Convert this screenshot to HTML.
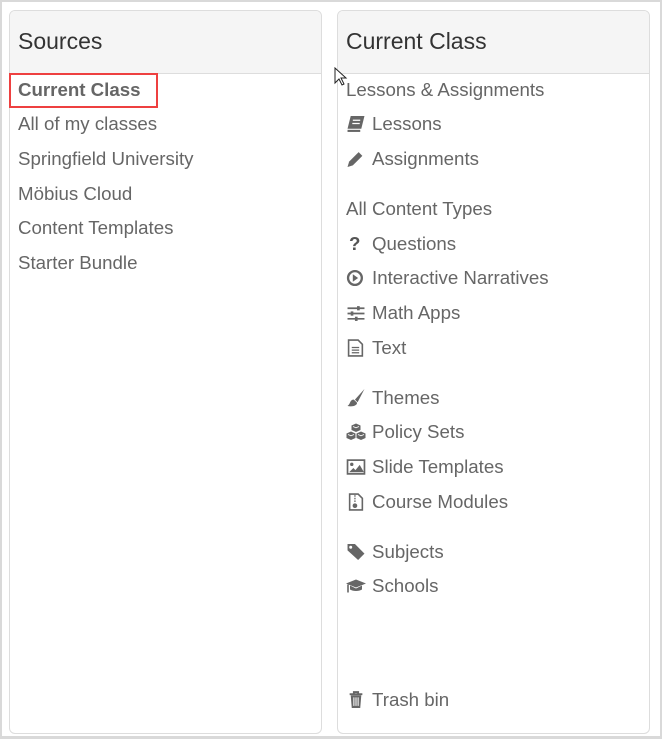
<!DOCTYPE html>
<html><head><meta charset="utf-8"><style>
*{margin:0;padding:0;box-sizing:border-box}
html,body{width:662px;height:739px;background:#fff;overflow:hidden}
body{font-family:"Liberation Sans",Arial,sans-serif;color:#666;position:relative}
.frame{position:absolute;left:0;top:0;width:662px;height:739px;border:2px solid #d9d9d9;border-bottom-width:3px}
.panel{position:absolute;top:10px;height:724px;border:1px solid #ddd;border-radius:6px;background:#fff;overflow:hidden}
.hd{height:63px;background:#f5f5f5;border-bottom:1px solid #ddd;font-size:23px;color:#333;padding:17px 0 0 8px}
.it{position:absolute;font-size:18.7px;line-height:22px;white-space:nowrap}
.ic{position:absolute;left:0;top:2px;width:20px;height:18px}
.r .it{left:8px}
.r .it.i{padding-left:26px}
</style></head><body>
<div class="frame"></div>
<div class="panel" style="left:9px;width:313px">
<div class="hd">Sources</div>
</div>
<div style="position:absolute;left:9px;top:73px;width:149px;height:35px;border:2px solid #ee4040"></div>
<div class="it" style="left:18px;top:79px;font-weight:bold">Current Class</div>
<div class="it" style="left:18px;top:113px">All of my classes</div>
<div class="it" style="left:18px;top:148px">Springfield University</div>
<div class="it" style="left:18px;top:183px">Möbius Cloud</div>
<div class="it" style="left:18px;top:217px">Content Templates</div>
<div class="it" style="left:18px;top:252px">Starter Bundle</div>

<div class="panel r" style="left:337px;width:313px">
<div class="hd">Current Class</div>
<div class="it" style="top:68px">Lessons &amp; Assignments</div>
<div class="it i" style="top:102px"><svg class="ic" viewBox="0 0 18 17"><path d="M4 1h13l-3 12H1z" fill="#666"/><path d="M1 15h12" stroke="#666" stroke-width="2"/><path d="M6 5h7M5.5 8h7" stroke="#fff" stroke-width="1.2"/></svg>Lessons</div>
<div class="it i" style="top:137px"><svg class="ic" viewBox="0 0 18 17"><path d="M1 16l1.5-5 9-9 3.5 3.5-9 9z" fill="#666"/></svg>Assignments</div>
<div class="it" style="top:187px">All Content Types</div>
<div class="it i" style="top:222px"><span style="position:absolute;left:3px;top:0;font-weight:bold;color:#555">?</span>Questions</div>
<div class="it i" style="top:256px"><svg class="ic" viewBox="0 0 18 17"><circle cx="8" cy="8.5" r="6.5" fill="none" stroke="#666" stroke-width="2.2"/><path d="M6 5l5 3.5-5 3.5z" fill="#666"/></svg>Interactive Narratives</div>
<div class="it i" style="top:291px"><svg class="ic" viewBox="0 0 18 17"><path d="M1 4h16M1 9h16M1 14h16" stroke="#666" stroke-width="1.6"/><rect x="10" y="2" width="2.5" height="4" fill="#666"/><rect x="4" y="7" width="2.5" height="4" fill="#666"/><rect x="8" y="12" width="2.5" height="4" fill="#666"/></svg>Math Apps</div>
<div class="it i" style="top:326px"><svg class="ic" viewBox="0 0 18 17"><path d="M2 1h9l4 4v11H2z" fill="none" stroke="#666" stroke-width="1.5"/><path d="M5 8h7M5 10.5h7M5 13h7" stroke="#666" stroke-width="1.2"/></svg>Text</div>
<div class="it i" style="top:376px"><svg class="ic" viewBox="0 0 18 17"><path d="M17 0l-9 10 2.5 2.5z" fill="#666"/><path d="M7 10c-4 0-3 4-6 6 4 1 9 0 9-3z" fill="#666"/></svg>Themes</div>
<div class="it i" style="top:410px"><svg class="ic" viewBox="0 0 20 17"><path d="M10 0l4.5 2v4.5L10 8.5 5.5 6.5V2z M5 8l4.5 2v4.5L5 16.5 0.5 14.5V10z M15 8l4.5 2v4.5L15 16.5 10.5 14.5V10z" fill="#666"/><path d="M7 3l3 1.3 3-1.3M2 11l3 1.3 3-1.3M12 11l3 1.3 3-1.3" stroke="#fff" stroke-width=".8" fill="none"/></svg>Policy Sets</div>
<div class="it i" style="top:445px"><svg class="ic" viewBox="0 0 18 17"><rect x="1" y="2" width="16" height="13" fill="none" stroke="#666" stroke-width="1.6"/><circle cx="5" cy="6" r="1.6" fill="#666"/><path d="M2.5 13.5l4-4 2 2 4-5 4 7z" fill="#666"/></svg>Slide Templates</div>
<div class="it i" style="top:480px"><svg class="ic" viewBox="0 0 18 17"><path d="M3 1h8l4 4v11H3z" fill="none" stroke="#666" stroke-width="1.5"/><path d="M8 2v7" stroke="#666" stroke-width="1.2" stroke-dasharray="1.5 1"/><circle cx="8" cy="12" r="2.2" fill="#666"/></svg>Course Modules</div>
<div class="it i" style="top:530px"><svg class="ic" viewBox="0 0 18 17"><path d="M1 1h7l9 9-6 6-10-9z" fill="#666"/><circle cx="4" cy="4" r="1.4" fill="#fff"/></svg>Subjects</div>
<div class="it i" style="top:564px"><svg class="ic" viewBox="0 0 20 17"><path d="M10 2L0 6l10 4 10-4z" fill="#666"/><path d="M4 8v4c3 2 9 2 12 0V8l-6 3z" fill="#666"/><path d="M2 7v8" stroke="#666" stroke-width="1.6"/></svg>Schools</div>
<div class="it i" style="top:678px"><svg class="ic" viewBox="0 0 18 17"><path d="M3 3h12M7 3V1h4v2" stroke="#666" stroke-width="1.8" fill="none"/><path d="M4 4h10l-1 12H5z" fill="#666"/><path d="M7 6v8M9 6v8M11 6v8" stroke="#fff" stroke-width="1"/></svg>Trash bin</div>
</div>
<svg style="position:absolute;left:334px;top:67px" width="14" height="20" viewBox="0 0 14 20"><path d="M1 1v15l4-4 3 6 2-1-3-6h5z" fill="#fff" stroke="#222" stroke-width="1"/></svg>
</body></html>
